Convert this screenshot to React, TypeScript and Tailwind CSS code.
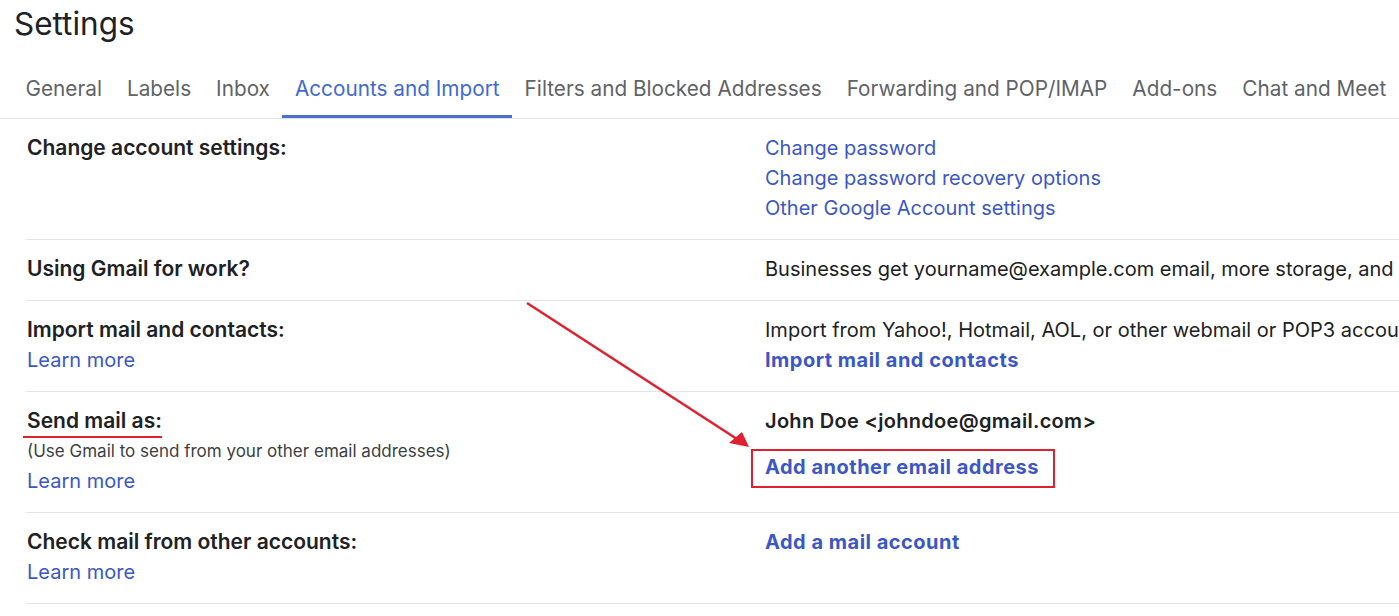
import React from "react";

const tabs = [
  "General",
  "Labels",
  "Inbox",
  "Accounts and Import",
  "Filters and Blocked Addresses",
  "Forwarding and POP/IMAP",
  "Add-ons",
  "Chat and Meet",
];

function Row({ left, right }: { left: React.ReactNode; right: React.ReactNode }) {
  return (
    <div className="flex border-b border-[#e3e3e3] pt-[14px] pb-[16px]">
      <div className="w-[739px] shrink-0 pl-[1px]">{left}</div>
      <div className="flex-1 min-w-0 whitespace-nowrap">{right}</div>
    </div>
  );
}

const Label = ({ children }: { children: React.ReactNode }) => (
  <div className="text-[21px] leading-[30px] font-semibold text-[#202124]">{children}</div>
);
const Link = ({ children, bold }: { children: React.ReactNode; bold?: boolean }) => (
  <div
    className={`text-[20px] leading-[30px] text-[#3b57c6] ${bold ? "font-bold tracking-[0.5px]" : ""}`}
  >
    {children}
  </div>
);
const Plain = ({ children }: { children: React.ReactNode }) => (
  <div className="text-[20px] leading-[30px] text-[#202124]">{children}</div>
);

export default function App() {
  return (
    <div
      className="relative w-[1399px] h-[616px] overflow-hidden bg-white"
      style={{ fontFamily: "Inter, 'Noto Sans', sans-serif" }}
    >
      <div className="pl-[14px] pt-[4px] text-[31.5px] leading-[40px] text-[#202124]">Settings</div>
      <div className="mt-[20px] flex border-b border-[#e3e3e3] pl-[13px] whitespace-nowrap">
        {tabs.map((t) => (
          <div
            key={t}
            className={`px-[12.5px] pt-[10px] pb-[11px] text-[20.75px] leading-[30px] border-b-[3px] ${
              t === "Accounts and Import"
                ? "text-[#4169d4] border-[#4a70d4]"
                : "text-[#5f6368] border-transparent"
            }`}
          >
            {t}
          </div>
        ))}
      </div>
      <div className="ml-[26px]">
        <Row
          left={<Label>Change account settings:</Label>}
          right={
            <>
              <Link>Change password</Link>
              <Link>Change password recovery options</Link>
              <Link>Other Google Account settings</Link>
            </>
          }
        />
        <Row
          left={<Label>Using Gmail for work?</Label>}
          right={<Plain>Businesses get yourname@example.com email, more storage, and admin tools with Google Workspace.</Plain>}
        />
        <Row
          left={
            <>
              <Label>Import mail and contacts:</Label>
              <Link>Learn more</Link>
            </>
          }
          right={
            <>
              <Plain>Import from Yahoo!, Hotmail, AOL, or other webmail or POP3 accounts.</Plain>
              <Link bold>Import mail and contacts</Link>
            </>
          }
        />
        <Row
          left={
            <>
              <Label>Send mail as:</Label>
              <div className="text-[17px] leading-[30px] text-[#3c4043]">
                (Use Gmail to send from your other email addresses)
              </div>
              <Link>Learn more</Link>
            </>
          }
          right={
            <>
              <div className="text-[20px] leading-[30px] font-semibold tracking-[0.3px] text-[#202124]">
                John Doe &lt;johndoe@gmail.com&gt;
              </div>
              <div className="mt-[13px] ml-[-14px] w-fit border-2 border-[#e02030] pl-[12px] pr-[14px] pt-[1px] pb-[4px]">
                <div className="text-[20px] leading-[30px] font-bold tracking-[0.5px] text-[#3b57c6]">
                  Add another email address
                </div>
              </div>
            </>
          }
        />
        <Row
          left={
            <>
              <Label>Check mail from other accounts:</Label>
              <Link>Learn more</Link>
            </>
          }
          right={<Link bold>Add a mail account</Link>}
        />
      </div>

      {/* red underline annotation */}
      <div className="absolute left-[23px] top-[436px] h-[2px] w-[139px] bg-[#e02030]" />
      {/* red arrow annotation */}
      <svg className="absolute left-0 top-0 pointer-events-none" width="1399" height="616">
        <line x1="527" y1="303" x2="737" y2="439" stroke="#e02030" strokeWidth="2.5" />
        <polygon points="749,447 729,443 742,432" fill="#e02030" />
      </svg>
    </div>
  );
}
